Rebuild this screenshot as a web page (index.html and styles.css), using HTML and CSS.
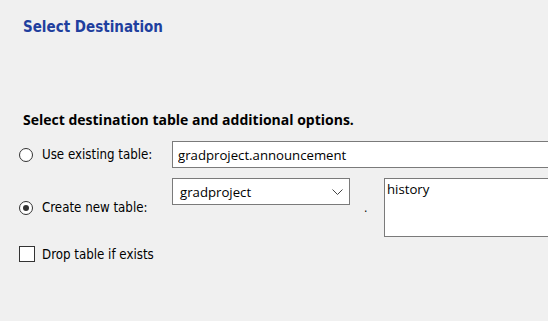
FILE: index.html
```html
<!DOCTYPE html>
<html lang="en">
<head>
    <meta charset="UTF-8">
    <title>Select Destination</title>
    <link rel="stylesheet" href="styles.css">
</head>
<body>
    <div class="page">
        <h1 class="title">Select Destination</h1>

        <h2 class="subtitle">Select destination table and additional options.</h2>

        <div class="form-grid">
            <label class="choice">
                <input type="radio" name="target" class="radio">
                <span>Use existing table:</span>
            </label>
            <input type="text" class="textbox wide" value="gradproject.announcement">

            <label class="choice">
                <input type="radio" name="target" class="radio" checked>
                <span>Create new table:</span>
            </label>
            <div class="combo">
                <span class="combo-text">gradproject</span>
                <svg class="chevron" width="11" height="6" viewBox="0 0 11 6">
                    <path d="M0.5 0.5 L5.5 5.5 L10.5 0.5" fill="none" stroke="#444" stroke-width="1"/>
                </svg>
            </div>
            <span class="dot">.</span>
            <textarea class="textarea">history</textarea>
        </div>

        <label class="choice check-row">
            <input type="checkbox" class="checkbox">
            <span>Drop table if exists</span>
        </label>
    </div>
</body>
</html>
```

FILE: styles.css
```css
body {
    margin: 0;
    padding: 0;
    background-color: #f0f0f0;
    width: 548px;
    height: 321px;
    overflow: hidden;
    font-family: "DejaVu Sans", sans-serif;
    font-stretch: condensed;
    font-size: 13.2px;
    color: #000;
}

.page {
    padding: 0 0 0 19px;
}

.title {
    margin: 0;
    padding: 17px 0 0 4px;
    font-size: 15px;
    line-height: 20px;
    font-weight: bold;
    color: #1f3f9e;
}

.subtitle {
    margin: 0;
    padding: 74px 0 0 4px;
    font-family: "Open Sans", sans-serif;
    font-stretch: normal;
    font-size: 14px;
    line-height: 18px;
    font-weight: bold;
}

.form-grid {
    display: grid;
    grid-template-columns: 153px 178px 34px 164px;
    row-gap: 10px;
    align-items: center;
    margin-top: 12px;
}

.choice {
    display: flex;
    align-items: center;
    gap: 9px;
}

.radio,
.checkbox {
    appearance: none;
    margin: 0;
    background: #fff;
    border: 1px solid #333;
    flex: none;
}

.radio {
    width: 14px;
    height: 14px;
    border-radius: 50%;
    position: relative;
}

.radio:checked::after {
    content: "";
    position: absolute;
    left: 3px;
    top: 3px;
    width: 6px;
    height: 6px;
    border-radius: 50%;
    background: #333;
}

.textbox,
.combo,
.textarea {
    box-sizing: border-box;
    margin: 0;
    background: #fff;
    border: 1px solid #7a7a7a;
    font-family: "Open Sans", sans-serif;
    font-stretch: normal;
    font-size: 13.2px;
    color: #000;
}

.textbox {
    height: 27px;
    padding: 0 5px;
    outline: none;
}

.wide {
    grid-column: 2 / 5;
    width: 376px;
    border-right: none;
}

.combo {
    align-self: start;
    height: 27px;
    display: flex;
    align-items: center;
    justify-content: space-between;
    padding: 0 6px 0 7px;
}

.dot {
    padding-left: 14px;
    font-size: 12px;
}

.textarea {
    height: 59px;
    width: 164px;
    padding: 2px 2px;
    border-right: none;
    resize: none;
    outline: none;
    line-height: 16px;
}

.check-row {
    margin-top: 9px;
    gap: 7px;
}

.checkbox {
    width: 16px;
    height: 16px;
}
```
